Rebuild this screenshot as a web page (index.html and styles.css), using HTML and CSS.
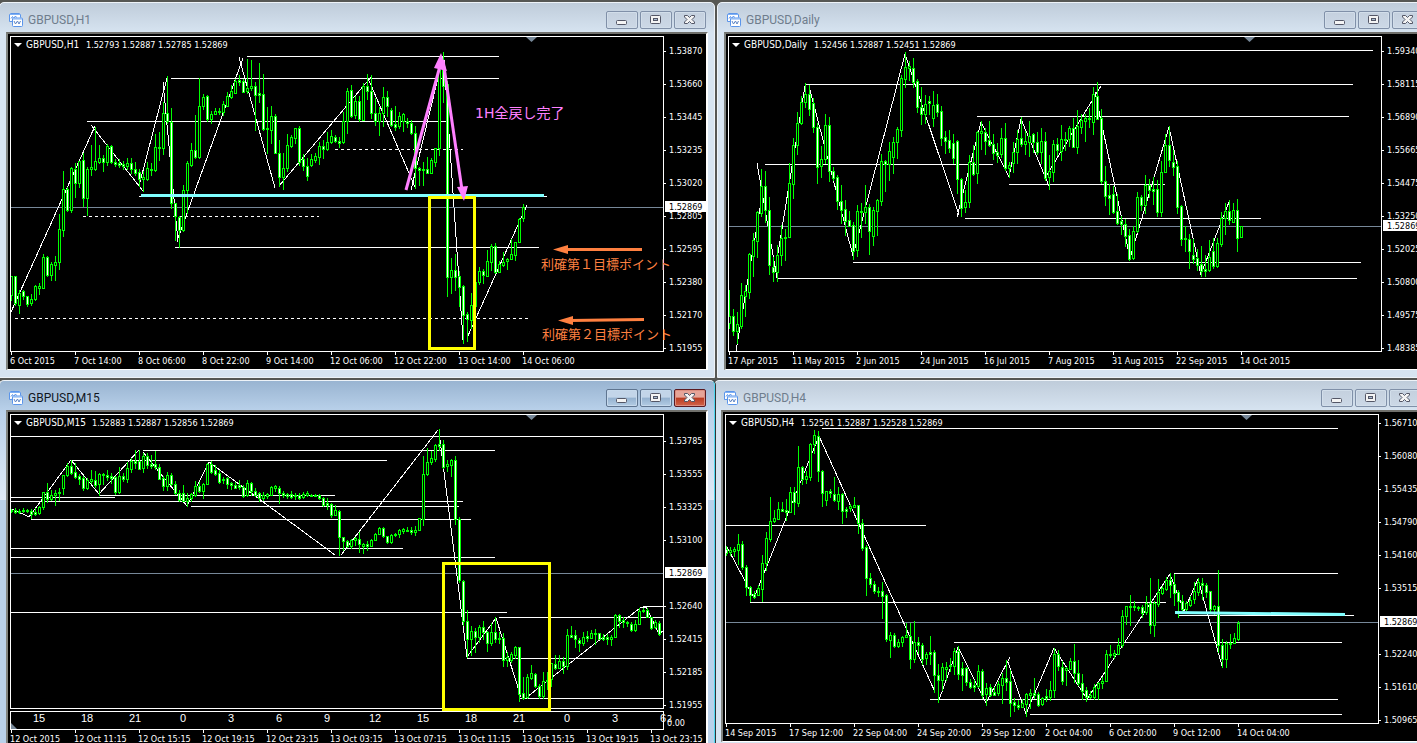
FILE: index.html
```html
<!DOCTYPE html>
<html lang="ja">
<head>
<meta charset="utf-8">
<title>GBPUSD</title>
<link rel="stylesheet" href="styles.css">
</head>
<body>
<svg class="defs" aria-hidden="true">
  <symbol id="icon-chart" viewBox="0 0 14 14">
    <path d="M.5 8.500V1.500L1.500 .5H10.500L11.500 1.500V4.500" fill="#fff" stroke="#5b95ea"/>
    <path d="M1 1.500H11" stroke="#7fb0f4"/>
    <path d="M2 5.500L3.500 3.500L4.500 5.500L6.500 3L7.500 4.500" fill="none" stroke="#5b95ea"/>
    <path d="M.5 8.500H3" stroke="#5b95ea"/>
    <rect x="3.500" y="5" width="10" height="8.500" rx="1" fill="#fff" stroke="#5b95ea"/>
    <path d="M4 6H13" stroke="#7fb0f4"/>
    <path d="M5 8L6.500 11L8.500 8L10 11L11.500 8" fill="none" stroke="#5c84c4"/>
  </symbol>
  <symbol id="icon-min" viewBox="0 0 12 12"><rect x=".5" y="6.500" width="10" height="4" rx="1" fill="#f4f4f4" stroke="#535666"/></symbol>
  <symbol id="icon-max" viewBox="0 0 12 12"><rect x=".5" y="1.500" width="10" height="8" rx="1" fill="#f4f4f4" stroke="#535666"/><rect x="3.500" y="4.500" width="4" height="2" fill="#a9bcd2" stroke="#535666"/></symbol>
  <symbol id="icon-close" viewBox="0 0 12 12"><path d="M.5 1.500H3.500L5.500 3.500L7.500 1.500H10.500V3L8 5.500L10.500 8V9.500H7.500L5.500 7.500L3.500 9.500H.5V8L3 5.500L.5 3Z" fill="#f4f4f4" stroke="#535666"/></symbol>
</svg>
<main class="desktop">
  <div class="row row-top">
    <section class="window window-left">
      <header class="titlebar">
        <svg class="app-icon"><use href="#icon-chart"/></svg>
        <h2 class="title">GBPUSD,H1</h2>
        <button class="control" aria-label="Minimize"><svg><use href="#icon-min"/></svg></button>
        <button class="control" aria-label="Maximize"><svg><use href="#icon-max"/></svg></button>
        <button class="control close" aria-label="Close"><svg><use href="#icon-close"/></svg></button>
      </header>
      <div class="client"><svg class="chart" data-chart="h1"></svg></div>
    </section>
    <section class="window window-right">
      <header class="titlebar">
        <svg class="app-icon"><use href="#icon-chart"/></svg>
        <h2 class="title">GBPUSD,Daily</h2>
        <button class="control" aria-label="Minimize"><svg><use href="#icon-min"/></svg></button>
        <button class="control" aria-label="Maximize"><svg><use href="#icon-max"/></svg></button>
        <button class="control close" aria-label="Close"><svg><use href="#icon-close"/></svg></button>
      </header>
      <div class="client"><svg class="chart" data-chart="daily"></svg></div>
    </section>
  </div>
  <div class="row row-bottom">
    <section class="window window-left active">
      <header class="titlebar">
        <svg class="app-icon"><use href="#icon-chart"/></svg>
        <h2 class="title">GBPUSD,M15</h2>
        <button class="control" aria-label="Minimize"><svg><use href="#icon-min"/></svg></button>
        <button class="control" aria-label="Maximize"><svg><use href="#icon-max"/></svg></button>
        <button class="control close" aria-label="Close"><svg><use href="#icon-close"/></svg></button>
      </header>
      <div class="client"><svg class="chart" data-chart="m15"></svg></div>
    </section>
    <section class="window window-right">
      <header class="titlebar">
        <svg class="app-icon"><use href="#icon-chart"/></svg>
        <h2 class="title">GBPUSD,H4</h2>
        <button class="control" aria-label="Minimize"><svg><use href="#icon-min"/></svg></button>
        <button class="control" aria-label="Maximize"><svg><use href="#icon-max"/></svg></button>
        <button class="control close" aria-label="Close"><svg><use href="#icon-close"/></svg></button>
      </header>
      <div class="client"><svg class="chart" data-chart="h4"></svg></div>
    </section>
  </div>
</main>
<script src="charts.js"></script>
</body>
</html>
```
FILE: styles.css
```css
* { box-sizing: border-box; }

body {
  margin: 0;
  height: 100vh;
  overflow: hidden;
  background: #565754;
  font-family: Roboto, "Noto Sans CJK JP", sans-serif;
}

.defs { display: none; }

.desktop {
  display: flex;
  flex-direction: column;
  gap: 2px;
  padding-top: 2px;
}

.row { display: grid; align-items: start; }
.row-top { grid-template-columns: 717fr 700fr; }
.row-bottom { grid-template-columns: 714fr 703fr; }

.window {
  min-width: 0;
  padding: 0 6px 7px;
  border: 1px solid #eef3f8;
  border-radius: 5px 5px 0 0;
  background: #d7e4f1 linear-gradient(#bfccda, #d7e4f1 30px) no-repeat;
}
.window-left { margin-left: -1px; margin-right: 2px; }
.window-right { margin-right: -16px; }
.row-bottom .window-right { margin-right: -13px; }

.window.active {
  position: relative;
  z-index: 1;
  margin-right: -1px;
  border-right-color: #4fd8f0;
  box-shadow: 1px 0 #303436;
  background:
    linear-gradient(#99b4d1, #b9d1ea 30px, #dfe9f6 119px, #b9d1ea 119px);
}

.titlebar {
  display: flex;
  align-items: center;
  gap: 2px;
  height: 29px;
  padding: 5px 2px 0 3px;
}
.app-icon { width: 14px; height: 14px; flex: none; }
.title {
  flex: 1;
  margin: 0 0 0 3px;
  font-size: 12px;
  line-height: 16px;
  font-weight: 400;
  color: #6f7d8d;
}
.active .title { color: #10161e; }

.control {
  display: flex;
  align-items: center;
  justify-content: center;
  width: 32px;
  height: 18px;
  padding: 0;
  border: 1px solid #8090a8;
  border-radius: 2px;
  background: linear-gradient(#c4d0de, #ccd8e6);
  box-shadow: inset 0 0 0 1px #d2deea;
}
.control svg { width: 12px; height: 12px; }
.active .control {
  border-color: #5f7590;
  background: linear-gradient(#c3d5e9 45%, #94b1cf 50%, #b3cce4);
  box-shadow: inset 0 0 0 1px #c6d9ec;
}
.active .close {
  border-color: #5a1a22;
  background: linear-gradient(#e6a498 45%, #b93a20 50%, #d2644a);
  box-shadow: inset 0 0 0 1px #dd8e80;
}

.client {
  border-top: 2px solid #70706c;
  border-left: 2px solid #80837f;
  border-right: 2px solid #fff;
  border-bottom: 1px solid #fff;
  background: #000;
}

.chart { display: block; width: 100%; height: auto; background: #000; }

.crisp { shape-rendering: crispEdges; }
.line { stroke: #fff; fill: none; }
.dash { stroke: #fff; stroke-dasharray: 3 3; }
.bid { stroke: #778899; }
.marker { fill: #778899; }
.solid { fill: #fff; }
.body-up { fill: #000; stroke: #00ff00; }
.body-down { fill: #fff; stroke: #00ff00; }
.wick { stroke: #00ff00; }
.support { stroke: #80ffff; stroke-width: 3; }
.box { fill: none; stroke: #ffff00; stroke-width: 3; }
.pink { stroke: #ff80ff; fill: #ff80ff; stroke-width: 3; }
.orange { stroke: #ff8040; fill: #ff8040; stroke-width: 3; }
.head { stroke-width: 0; }

.label {
  fill: #fff;
  font-family: "DejaVu Sans Condensed", "Noto Sans", sans-serif;
  font-size: 9px;
}
.label-symbol { font-size: 10px; }
.label-dark { fill: #000; }
.label-hour { font-family: "Liberation Sans", sans-serif; font-size: 11px; text-anchor: middle; }
.note-pink { fill: #ff80ff; font-family: "DejaVu Sans", "Noto Sans CJK JP", sans-serif; font-size: 14px; }
.note-orange { fill: #ff8040; font-family: "Noto Sans CJK JP", sans-serif; font-size: 13px; }
```
FILE: charts.js
```js
// Candles are listed left to right as "high top bottom low"; a leading "d" marks a bearish bar.
const charts = {
  h1: {
    left: 8, top: 34, height: 335, bottom: 351,
    symbol: 'GBPUSD,H1', quoteX: 86, quote: '1.52793 1.52887 1.52785 1.52869',
    prices: [[51, '1.53870'], [84, '1.53660'], [117, '1.53445'], [150, '1.53235'], [183, '1.53020'], [216, '1.52805'], [249, '1.52595'], [282, '1.52380'], [315, '1.52170'], [348, '1.51955']],
    dates: ['6 Oct 2015', '7 Oct 14:00', '8 Oct 06:00', '8 Oct 22:00', '9 Oct 14:00', '12 Oct 06:00', '12 Oct 22:00', '13 Oct 14:00', '14 Oct 06:00'],
    bid: 207,
    lines: [[247, 499, 56], [171, 499, 78], [87, 448, 121], [139, 547, 196], [175, 539, 247]],
    dashes: [[335, 463, 149], [83, 319, 216], [15, 528, 318]],
    zigzag: ['11,312 95,126', '91,125 143,191', '139,186 167,78', '163,82 178,242', '178,238 243,58', '239,57 275,188', '279,186 371,77', '367,76 415,187', '411,190 443,57', '444,60 463,340', '467,338 527,205'],
    candles: '276 276 295 300,d276 276 303 305,290 293 305 313,d290 291 296 299,d296 296 304 306,294 299 303 305,285 286 299 300,283 286 288 294,254 257 288 288,d256 257 275 276,262 264 275 280,256 262 265 280,214 229 262 269,171 189 230 236,d187 189 210 211,167 168 210 212,d163 169 183 197,161 161 183 187,d153 160 198 206,167 169 198 215,145 167 169 175,127 161 169 170,145 158 162 163,d155 158 162 171,144 146 162 165,d145 146 162 163,d159 162 164 166,d159 163 165 167,d161 164 166 169,158 163 166 169,d158 163 169 173,d162 169 173 175,d169 172 179 186,171 177 179 191,162 168 179 180,d163 169 170 175,134 147 170 171,132 147 148 160,102 113 148 154,d76 113 121 123,d108 122 203 208,d203 203 216 240,d216 217 230 247,185 190 230 231,161 163 190 213,143 150 165 166,d115 150 157 158,78 106 157 158,94 97 106 109,d95 96 119 121,111 114 119 123,108 111 114 114,d108 111 112 114,101 104 112 115,92 96 106 106,85 91 97 98,79 81 93 93,d75 80 82 85,d79 81 92 92,59 88 91 93,60 86 88 90,d82 86 95 130,d63 93 95 102,d74 94 129 130,d107 128 129 153,106 116 130 143,d114 116 153 153,d140 153 177 186,153 168 177 189,134 145 168 171,135 137 146 147,128 128 138 143,d126 128 162 165,d154 159 166 170,d158 166 176 180,154 159 165 166,153 156 160 162,142 146 157 164,d140 146 149 158,132 142 149 150,130 136 142 143,d135 137 141 142,d137 141 143 147,112 121 142 143,88 91 121 133,d85 90 116 117,96 101 115 118,d96 101 119 121,83 86 120 120,d74 86 91 99,d75 91 113 118,d98 113 121 125,107 113 121 135,87 97 113 126,d91 97 106 116,d108 110 125 126,d106 124 127 130,112 116 126 128,113 114 121 131,d118 121 123 127,d120 123 133 134,d126 133 168 188,d167 168 170 185,162 169 170 185,d157 169 173 173,158 160 173 173,148 148 162 166,68 70 148 155,d52 68 86 102,d81 84 277 296,258 270 277 293,d254 270 277 290,d271 276 287 306,d285 286 315 343,d312 314 319 341,293 305 320 328,281 282 306 306,267 271 282 284,d269 271 275 283,250 261 276 276,244 246 262 270,d243 246 272 273,261 264 272 272,252 262 265 266,258 259 261 269,239 254 259 259,242 242 255 260,218 219 242 242,204 207 218 221'
  },
  daily: {
    left: 726, top: 34, height: 335, bottom: 351,
    symbol: 'GBPUSD,Daily', quoteX: 814, quote: '1.52456 1.52887 1.52451 1.52869',
    prices: [[51, '1.59340'], [84, '1.58115'], [117, '1.56890'], [150, '1.55665'], [183, '1.54475'], [216, '1.53250'], [249, '1.52025'], [282, '1.50800'], [315, '1.49575'], [348, '1.48385']],
    dates: ['17 Apr 2015', '11 May 2015', '2 Jun 2015', '24 Jun 2015', '16 Jul 2015', '7 Aug 2015', '31 Aug 2015', '22 Sep 2015', '14 Oct 2015'],
    bid: 226,
    lines: [[909, 1373, 50], [806, 1353, 84], [977, 1349, 116], [765, 993, 164], [1009, 1165, 184], [965, 1261, 218], [853, 1361, 262], [777, 1357, 278]],
    dashes: [],
    zigzag: ['736,351 763,190', '757,163 777,278', '775,272 805,86', '809,86 853,256', '853,256 905,54', '905,54 959,215', '957,217 981,122', '981,122 1009,177', '1009,177 1021,119', '1021,119 1049,186', '1045,178 1101,86', '1095,92 1130,258', '1130,258 1169,127', '1169,127 1201,275', '1201,274 1229,202'],
    candles: '290 316 323 328,d309 316 331 335,312 324 331 343,283 295 326 328,285 291 296 316,253 254 292 298,233 240 256 276,211 212 241 257,169 186 213 216,d171 186 210 222,d197 210 265 274,d257 267 272 281,245 255 272 281,225 238 255 265,229 237 238 260,163 183 237 237,138 145 184 198,112 123 145 154,96 102 123 124,83 94 102 107,d85 94 109 115,d98 103 127 132,d123 127 167 183,146 159 166 177,114 125 159 163,d117 125 171 181,d167 171 178 180,d175 177 201 209,d185 201 210 223,d200 209 221 235,d211 220 226 226,d222 225 251 259,205 211 250 256,203 211 212 237,185 207 212 223,d204 207 231 254,207 210 236 245,199 200 211 235,154 161 201 205,d160 161 164 191,142 151 164 180,137 142 157 173,127 129 142 158,75 78 130 136,52 67 79 87,61 66 68 80,d58 68 82 87,d79 81 107 112,d87 107 114 124,95 104 114 123,d96 101 103 114,91 105 118 126,d94 104 112 116,d106 111 138 145,d131 137 141 153,d130 140 148 152,d134 143 158 163,d140 141 179 193,d178 179 208 216,190 202 207 212,155 162 202 207,d145 162 174 175,131 132 173 183,121 131 133 149,d128 132 141 154,d121 140 145 146,d134 144 153 159,d143 152 155 162,128 138 154 157,d123 138 168 170,162 165 168 177,142 152 163 172,130 139 152 163,d117 138 144 146,131 141 144 154,121 136 142 156,d133 134 142 152,d132 142 152 154,128 141 152 163,d132 141 178 180,155 171 177 189,140 144 172 181,d138 144 150 155,125 139 151 160,132 139 140 150,126 128 139 146,d118 128 147 147,110 126 147 153,114 120 127 133,114 118 121 141,108 118 119 127,87 94 122 134,d82 96 119 119,d109 118 181 183,d166 181 196 205,d184 195 198 214,d186 194 212 213,d194 211 223 224,d216 221 224 234,d219 224 236 246,d229 235 259 260,226 231 258 259,192 197 231 232,d195 197 205 210,175 185 205 213,d179 185 190 197,d177 189 191 204,d180 189 212 216,161 172 212 216,134 145 172 172,d126 145 160 166,d150 162 167 175,d161 166 207 213,d205 206 239 245,d226 238 239 251,d234 239 251 268,d239 255 259 263,d249 258 265 270,d246 264 271 276,d255 269 271 276,240 257 270 271,d238 251 266 268,238 243 266 267,212 218 244 246,203 211 218 234,d200 211 220 224,203 210 222 222,d199 210 238 251,226 226 237 237'
  },
  m15: {
    left: 8, top: 412, height: 335, bottom: 708,
    symbol: 'GBPUSD,M15', quoteX: 92, quote: '1.52883 1.52887 1.52856 1.52869',
    prices: [[441, '1.53785'], [474, '1.53555'], [507, '1.53325'], [540, '1.53100'], [606, '1.52640'], [639, '1.52415'], [672, '1.52185'], [705, '1.51955']],
    dates: ['12 Oct 2015', '12 Oct 11:15', '12 Oct 15:15', '12 Oct 19:15', '12 Oct 23:15', '13 Oct 03:15', '13 Oct 07:15', '13 Oct 11:15', '13 Oct 15:15', '13 Oct 19:15', '13 Oct 23:15'],
    bid: 573,
    lines: [[11, 663, 436], [143, 495, 450], [71, 387, 460], [99, 335, 495], [11, 115, 497], [11, 463, 501], [191, 459, 506], [31, 471, 519], [11, 403, 548], [11, 495, 557], [11, 507, 612], [499, 663, 617], [467, 663, 658], [519, 663, 698], [643, 663, 606]],
    dashes: [],
    zigzag: ['12,509 29,517 71,460 99,494 139,450', '143,452 187,506 209,462 335,555', '341,555 438,430', '439,432 456,568 467,657 496,618 521,697', '527,697 640,608 646,607 659,634 663,631'],
    candles: 'd509 510 511 512,d508 510 512 513,d509 511 512 513,d508 510 511 512,509 510 511 512,d509 511 514 518,d508 512 514 515,506 507 513 514,492 492 507 509,d483 492 499 502,490 495 499 500,490 493 495 505,488 492 493 500,475 475 488 494,463 466 475 476,d460 466 473 474,d463 472 477 478,d474 476 479 484,d476 478 488 490,478 480 488 489,470 479 481 483,d471 480 485 487,473 474 484 495,473 474 475 484,d470 475 477 480,d473 476 478 483,d476 477 492 494,467 476 492 493,d473 476 479 481,462 468 479 482,458 461 469 472,d450 461 463 468,d450 461 469 469,453 456 468 472,d453 456 465 468,d455 464 466 468,d451 464 467 469,d464 467 479 479,d476 478 486 490,472 475 486 490,d473 475 484 485,d481 484 493 494,d490 493 500 501,d485 493 501 501,493 498 501 506,493 494 498 501,481 486 495 496,d482 486 491 492,483 484 491 498,463 464 484 484,d461 464 472 473,d465 470 474 475,d470 473 482 483,d477 479 480 483,d477 478 484 488,d482 483 485 489,d482 485 488 488,d480 485 487 489,d485 487 496 497,480 483 495 496,d482 483 491 495,d488 491 495 496,d492 493 498 501,492 495 498 500,493 494 496 498,486 487 495 495,485 486 488 491,d486 488 493 503,d491 493 495 497,d493 494 496 498,d491 494 497 498,493 495 496 499,d493 495 498 499,492 494 497 498,491 493 495 496,d494 495 495 496,d494 495 496 496,d494 495 498 499,d497 498 505 506,d498 503 505 509,d503 504 515 517,505 510 515 515,d510 511 537 555,d537 537 541 550,d540 541 546 547,539 540 546 548,537 538 540 545,d532 539 544 552,543 544 546 553,d541 544 546 550,539 540 546 546,533 534 540 540,527 528 534 534,d527 528 536 537,d536 536 542 543,534 535 542 543,533 534 535 536,529 530 534 537,528 529 531 533,527 530 531 531,d527 530 532 534,526 530 532 535,518 518 530 530,456 474 519 525,448 462 474 475,451 458 462 464,444 445 459 461,d429 444 446 450,d440 444 467 468,460 464 466 471,459 460 465 476,d456 460 519 524,d517 519 580 582,d580 581 621 625,d610 621 639 657,626 631 639 655,d628 631 637 652,625 627 637 642,d621 627 632 639,d631 632 643 651,623 632 643 645,d617 632 639 642,d632 638 639 643,d633 638 660 666,652 657 660 666,652 654 660 662,646 647 655 658,d647 647 694 701,d677 693 698 699,674 677 697 698,665 673 678 679,d673 674 686 687,d684 686 696 698,672 681 696 698,d672 680 681 689,663 663 679 686,d655 664 668 669,655 661 668 668,d657 661 666 673,629 635 666 669,d626 635 637 637,d630 635 639 647,d638 640 643 651,632 637 643 645,d631 636 638 641,630 633 638 638,629 633 634 644,d633 633 639 639,d634 637 639 640,d634 637 639 644,635 637 639 645,614 615 637 637,d614 615 621 627,d617 620 622 627,621 622 623 626,d622 624 630 631,620 624 630 631,608 611 624 624,608 610 611 612,d608 610 617 617,d617 617 628 629,620 622 627 628,d621 623 634 635'
  },
  h4: {
    left: 723, top: 412, height: 329, bottom: 723,
    symbol: 'GBPUSD,H4', quoteX: 801, quote: '1.52561 1.52887 1.52528 1.52869',
    prices: [[423, '1.56710'], [456, '1.56080'], [489, '1.55435'], [522, '1.54790'], [555, '1.54160'], [588, '1.53515'], [654, '1.52240'], [687, '1.51610'], [720, '1.50965']],
    dates: ['14 Sep 2015', '17 Sep 12:00', '22 Sep 04:00', '24 Sep 20:00', '29 Sep 12:00', '2 Oct 04:00', '6 Oct 20:00', '9 Oct 12:00', '14 Oct 04:00'],
    bid: 622,
    lines: [[822, 1338, 428], [726, 926, 525], [750, 1166, 602], [954, 1342, 642], [930, 1338, 699], [1030, 1342, 714], [1174, 1338, 573], [1178, 1354, 615]],
    dashes: [],
    zigzag: ['727,547 754,598 819,436 935,692', '939,700 958,647 986,703 1010,657', '1008,662 1026,714 1054,648 1087,699 1170,574 1184,611 1198,579 1222,666'],
    candles: 'd546 549 553 555,547 550 552 555,547 549 551 556,534 544 550 564,d541 544 567 569,d565 567 587 595,d586 587 595 601,d591 594 597 598,585 588 595 595,555 563 589 601,532 538 563 570,497 521 539 541,510 518 521 522,502 509 519 519,d502 509 511 511,d499 510 512 520,487 492 512 512,d487 492 502 514,446 467 503 506,d466 467 479 484,471 476 479 483,443 444 477 480,430 435 444 453,d431 436 471 481,d470 471 493 506,491 491 500 505,d489 491 493 497,d477 494 500 501,487 494 501 509,d493 494 511 523,d507 509 511 517,504 506 508 511,497 505 507 507,d505 505 523 533,d519 523 548 550,d545 547 578 595,d573 578 584 587,d581 584 591 593,d587 591 592 596,d582 591 596 618,d594 595 639 641,632 635 640 657,d633 635 646 647,639 642 646 647,636 637 642 646,623 635 637 637,d623 636 659 668,621 642 659 662,d637 642 645 653,d643 645 659 664,652 654 658 664,d636 652 654 664,d650 652 675 692,d664 675 680 702,663 667 680 690,662 667 669 680,d658 665 666 671,648 651 666 674,d646 651 674 679,d662 668 675 690,d667 668 682 685,d679 682 687 688,d680 685 687 691,665 671 686 687,d669 671 695 698,683 688 694 705,d684 687 695 696,d687 692 695 695,681 684 693 695,673 678 685 703,d660 678 682 690,d670 681 703 716,d698 702 705 711,d700 705 707 709,699 703 707 707,693 694 704 716,689 693 695 708,d678 693 695 698,d692 694 705 706,697 698 704 705,d689 696 698 701,681 690 697 700,648 654 690 697,d650 654 666 670,d661 667 681 684,667 668 670 685,658 661 669 669,d644 661 673 682,d660 673 683 685,d674 683 691 699,d687 690 697 701,691 695 697 698,684 687 697 699,682 683 688 699,677 681 683 688,650 654 681 681,645 654 655 657,650 653 655 658,638 645 654 654,610 616 645 647,606 606 616 624,d595 606 607 625,601 606 607 610,606 607 608 610,d605 607 613 617,596 603 612 614,d578 603 625 633,601 603 625 636,579 592 604 606,586 588 593 594,577 580 589 590,d573 580 585 597,d574 584 593 605,d590 592 601 617,d595 601 609 610,601 603 609 610,596 600 605 606,582 591 599 603,578 582 592 595,d578 583 585 599,d583 585 592 597,d591 591 609 613,605 606 609 614,d570 606 645 652,d639 645 659 667,641 643 659 667,634 643 644 648,633 638 643 643,621 623 639 640'
  }
};

// Hand-drawn notes laid over the charts.
const notes = {
  h1: `
    <path class="support crisp" d="M141 195.5H544"/>
    <rect class="box crisp" x="429.5" y="197.5" width="45" height="151"/>
    <path class="pink" d="M406 190L440 66"/><path class="pink head" d="M441 53L447 71L434 68Z"/>
    <path class="pink" d="M443 60L462 190"/><path class="pink head" d="M464 201L457 187L468 186Z"/>
    <text class="note-pink" x="475" y="118">1H全戻し完了</text>
    <path class="orange" d="M565 249.5H642"/><path class="orange head" d="M553 249.500L568 245V254Z"/>
    <text class="note-orange" x="541" y="269">利確第１目標ポイント</text>
    <path class="orange" d="M570 320.500L644 319.500"/><path class="orange head" d="M558 320.500L573 316V325Z"/>
    <text class="note-orange" x="542" y="339">利確第２目標ポイント</text>`,
  m15: `
    <path class="line crisp" d="M10.500 729.500V711.500H663.500V729.500H10.500"/>
    <path class="marker" d="M11 723L17 729H11Z"/>
    ${['15', '18', '21', '0', '3', '6', '9', '12', '15', '18', '21', '0', '3', '6'].map((h, i) => `<text class="label label-hour" x="${39 + 48 * i}" y="722">${h}</text>`).join('')}
    <text class="label" x="667" y="722">2</text><text class="label" x="667" y="726">0.00</text>
    <rect class="box crisp" x="443.5" y="563.5" width="106" height="146"/>`,
  h4: '<path class="support" d="M1175 612.500L1345 614.500"/>'
};

function candle(spec, x) {
  const kind = spec[0] === 'd' ? 'down' : 'up';
  const [high, top, bottom, low] = spec.replace('d', '').split(' ').map(Number);
  return `<path class="wick" d="M${x + .5} ${high}V${low + 1}"/>` +
    `<rect class="body-${kind}" x="${x - .5}" y="${top + .5}" width="2" height="${Math.max(bottom - top, 1)}"/>`;
}

function draw(svg) {
  const name = svg.dataset.chart;
  const c = charts[name];
  const x0 = c.left + 2, y0 = c.top + 2, right = c.left + 655;
  const axis = name === 'm15' ? 729 : c.bottom;
  svg.setAttribute('viewBox', `${c.left} ${c.top} 698 ${c.height}`);
  svg.innerHTML = `
    <clipPath id="clip-${name}"><rect x="${x0}" y="${y0}" width="654" height="${c.bottom - y0}"/></clipPath>
    <g class="crisp" clip-path="url(#clip-${name})">
      <path class="bid" d="M${x0} ${c.bid + .5}H${right}"/>
      ${c.lines.map(([a, b, y]) => `<path class="line" d="M${a} ${y + .5}H${b}"/>`).join('')}
      ${c.dashes.map(([a, b, y]) => `<path class="dash" d="M${a} ${y + .5}H${b}"/>`).join('')}
      ${c.zigzag.map(p => `<polyline class="line" points="${p}"/>`).join('')}
      ${c.candles.split(',').map((s, i) => candle(s, c.left + 3 + 4 * i)).join('')}
    </g>
    <rect class="line crisp" x="${x0 + .5}" y="${y0 + .5}" width="653" height="${c.bottom - y0}"/>
    <path class="marker" d="M${c.left + 518} ${y0 + 1}h11l-5.500 5z"/>
    <path class="solid" d="M${c.left + 6} ${y0 + 7}h8l-4 4z"/>
    <text class="label label-symbol" x="${c.left + 18}" y="${y0 + 12}">${c.symbol}</text>
    <text class="label" x="${c.quoteX}" y="${y0 + 12}">${c.quote}</text>
    ${c.prices.map(([y, t]) => `<path class="line crisp" d="M${right} ${y + .5}h3"/><text class="label" x="${right + 6}" y="${y + 3}">${t}</text>`).join('')}
    ${c.dates.map((t, i) => `<path class="line crisp" d="M${c.left + 3.5 + 64 * i} ${axis}v4"/><text class="label" x="${c.left + 2 + 64 * i}" y="${axis + 13}">${t}</text>`).join('')}
    <rect class="solid" x="${right + 2}" y="${c.bid - 6}" width="41" height="11"/>
    <text class="label label-dark" x="${right + 6}" y="${c.bid + 3}">1.52869</text>
    ${notes[name] || ''}`;
}

document.querySelectorAll('.chart').forEach(draw);
```
